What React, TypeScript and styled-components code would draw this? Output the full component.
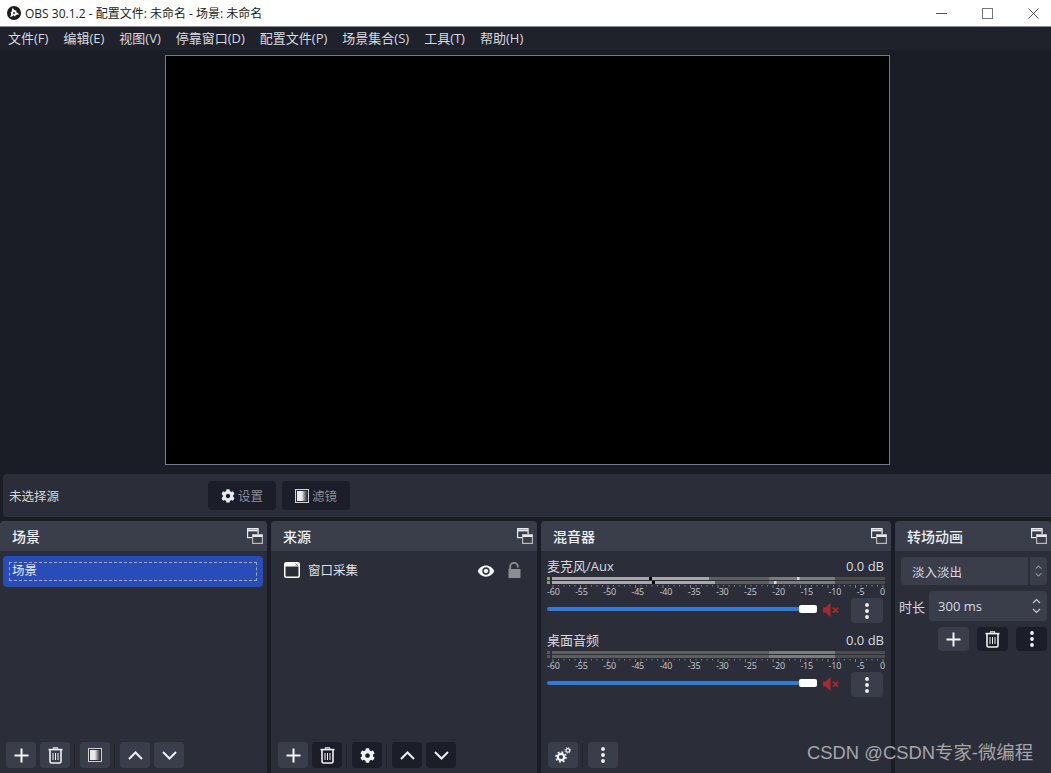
import React from 'react'
import styled, { createGlobalStyle } from 'styled-components'
import { FaCog } from 'react-icons/fa'
import { MdVisibility } from 'react-icons/md'

const FONT = `"Open Sans", "Noto Sans CJK SC", "Noto Sans", sans-serif`

const GlobalStyle = createGlobalStyle`
  html, body { margin: 0; padding: 0; background: #1a1c26; overflow: hidden; }
  body { font-family: ${FONT}; color: #e6e8ee; font-size: 12px; }
  * { box-sizing: border-box; }
`

const Window = styled.div`
  position: relative;
  width: 1051px;
  height: 773px;
  display: flex;
  flex-direction: column;
  background: #1a1c26;
`

const TitleBar = styled.div`
  height: 27px;
  flex: none;
  background: #fff;
  border-bottom: 1px solid #8a8a8a;
  color: #222;
  display: flex;
  align-items: center;
  padding-left: 7px;
  font-size: 12px;
`

const TitleText = styled.span`
  margin-left: 4px;
  flex: 1;
`

const WinButton = styled.div`
  width: 46px;
  height: 26px;
  padding-left: 10px;
  display: flex;
  align-items: center;
  justify-content: center;
`

const MenuBar = styled.div`
  height: 23px;
  flex: none;
  background: #1f222b;
  display: flex;
  align-items: center;
  padding: 0 0 2px 8px;
  gap: 15px;
  color: #d8dae0;
`

const MenuItem = styled.span`
  font-size: 13px;
  white-space: nowrap;
`

const PreviewArea = styled.div`
  height: 424px;
  flex: none;
  display: flex;
  justify-content: center;
  padding: 5px 161px 9px 165px;
`

const PreviewCanvas = styled.div`
  width: 100%;
  background: #000;
  border: 1px solid #767a88;
`

const ContextBar = styled.div`
  height: 43px;
  flex: none;
  margin: 0 0 4px 3px;
  background: #2b2e38;
  border-radius: 4px 0 0 4px;
  display: flex;
  align-items: center;
  padding-left: 6px;
`

const ContextLabel = styled.span`
  width: 199px;
  font-size: 12.5px;
  color: #d4d6dc;
`

const ContextButton = styled.div`
  width: 68px;
  height: 29px;
  margin-right: 6px;
  background: #1b1d28;
  border-radius: 4px;
  color: #8d8f98;
  display: flex;
  align-items: center;
  justify-content: center;
  gap: 3px;
  font-size: 12.5px;
`

const Docks = styled.div`
  flex: 1;
  min-height: 0;
  display: grid;
  grid-template-columns: 267px 266px 350px 156px;
  column-gap: 4px;
`

const Dock = styled.section`
  background: #2b2e38;
  border-radius: 4px 4px 0 0;
  display: flex;
  flex-direction: column;
  min-width: 0;
`

const DockHeader = styled.header`
  height: 30px;
  flex: none;
  background: #3a3e4a;
  border-radius: 4px 4px 0 0;
  display: flex;
  align-items: center;
  justify-content: space-between;
  padding: 0 4px 0 12px;
  font-size: 14px;
  font-weight: 500;
  color: #eceef2;
`

const DockBody = styled.div`
  flex: 1;
  min-height: 0;
  display: flex;
  flex-direction: column;
`

const SceneList = styled.div`
  flex: 1;
  padding: 5px 4px 0 3px;
`

const SceneItem = styled.div`
  height: 31px;
  background: #284cb8;
  border-radius: 4px;
  padding: 6px;
`

const SceneEdit = styled.div`
  height: 19px;
  border: 1px dashed #a5a9b8;
  padding-left: 2px;
  line-height: 16px;
  font-size: 12.5px;
  color: #e8eaf2;
`

const SourceRow = styled.div`
  flex: 1;
  display: flex;
  align-items: flex-start;
  padding: 11px 9px 0 13px;
  font-size: 12.5px;
  color: #dfe1e8;
`

const SourceName = styled.span`
  margin-left: 8px;
  flex: 1;
  line-height: 17px;
`

const SourceToggle = styled.span`
  display: flex;
  width: 28px;
  justify-content: center;
`

const Toolbar = styled.div<{ $left?: number }>`
  height: 31px;
  flex: none;
  display: flex;
  align-items: flex-start;
  gap: 4px;
  padding-left: ${(p) => p.$left ?? 6}px;
`

const ToolButton = styled.div<{ $dark?: boolean; $w?: number; $h?: number }>`
  width: ${(p) => p.$w ?? 30}px;
  height: ${(p) => p.$h ?? 26}px;
  flex: none;
  border-radius: 4px;
  background: ${(p) => (p.$dark ? '#1b1d28' : '#3a3e4a')};
  color: #f2f3f6;
  display: flex;
  align-items: center;
  justify-content: center;
`

const ToolSep = styled.div`
  width: 1px;
  height: 24px;
  margin: 1px 1px 0 0;
  background: #20222c;
`

const Channels = styled.div`
  flex: 1;
  padding: 5px 6px 0;
  display: flex;
  flex-direction: column;
  gap: 10px;
`

const Channel = styled.div`
  height: 64px;
  display: flex;
  flex-direction: column;
`

const ChannelHead = styled.div`
  height: 19px;
  display: flex;
  justify-content: space-between;
  align-items: center;
  font-size: 13px;
  color: #d8dae0;
  padding-right: 1px;
`

const MeterWrap = styled.div`
  height: 11px;
  display: block;
  width: 338px;
`

const ScaleLabels = styled.div`
  display: flex;
  justify-content: space-between;
  width: 338px;
  height: 11px;
  font-size: 9px;
  line-height: 11px;
  color: #c8cad0;
  letter-spacing: -0.2px;
`

const FaderRow = styled.div`
  display: flex;
  align-items: center;
  height: 25px;
  margin-top: 1px;
`

const FaderTrack = styled.div`
  position: relative;
  width: 270px;
  height: 4px;
  margin-top: -3px;
  border-radius: 2px;
  background: #2f7bd6;
`

const FaderKnob = styled.div`
  position: absolute;
  right: 0;
  top: -2px;
  width: 18px;
  height: 8px;
  border-radius: 2px;
  background: #fff;
`

const MuteSlot = styled.div`
  width: 34px;
  display: flex;
  justify-content: flex-start;
  padding-left: 6px;
  margin-top: -2px;
`

const TransitionBody = styled.div`
  flex: 1;
  padding: 6px 4px 0 6px;
  display: flex;
  flex-direction: column;
`

const Combo = styled.div`
  height: 28px;
  background: #3a3e4a;
  border-radius: 4px;
  display: flex;
  align-items: center;
  color: #d8dae0;
  font-size: 12.5px;
`

const ComboText = styled.span`
  flex: 1;
  padding-left: 11px;
`

const ComboArrow = styled.span`
  width: 19px;
  height: 28px;
  border-left: 2px solid #2b2e38;
  display: flex;
  align-items: center;
  justify-content: center;
`

const DurationRow = styled.div`
  display: flex;
  align-items: center;
  margin-top: 6px;
  margin-left: -2px;
  font-size: 13px;
  color: #d8dae0;
`

const Spin = styled.div`
  width: 118px;
  height: 30px;
  margin-left: 4px;
  background: #3a3e4a;
  border-radius: 4px;
  display: flex;
  align-items: center;
  justify-content: space-between;
  padding: 0 6px 0 9px;
`

const TransitionTools = styled.div`
  display: flex;
  justify-content: flex-end;
  gap: 8px;
  margin-top: 6px;
`

const Watermark = styled.div`
  position: absolute;
  left: 807px;
  top: 740px;
  font-size: 18.4px;
  line-height: 25px;
  color: #a4a6aa;
  font-family: "Liberation Sans", "Noto Sans CJK SC", sans-serif;
  white-space: nowrap;
`

const menus = ['文件(F)', '编辑(E)', '视图(V)', '停靠窗口(D)', '配置文件(P)', '场景集合(S)', '工具(T)', '帮助(H)']
const scale = ['-60', '-55', '-50', '-45', '-40', '-35', '-30', '-25', '-20', '-15', '-10', '-5', '0']

function ObsLogo() {
  const blade = 'M7 7 C4.6 6.2 4.2 3.4 6 1.8 C6.2 3.6 7.6 4.6 9.4 4.4 C9.8 5.8 8.6 7.2 7 7 Z'
  return (
    <svg width="14" height="14" viewBox="0 0 14 14">
      <circle cx="7" cy="7" r="7" fill="#1c1c1c" />
      {[0, 120, 240].map((a) => (
        <path key={a} d={blade} fill="#fff" transform={`rotate(${a} 7 7)`} />
      ))}
      <circle cx="7" cy="7" r="0.9" fill="#1c1c1c" />
    </svg>
  )
}

function FloatIcon() {
  return (
    <svg width="16" height="16" viewBox="0 0 16 16" fill="none" stroke="#e8e9ec" strokeWidth="1.2">
      <rect x="0.6" y="0.6" width="10.5" height="9" />
      <line x1="0.6" y1="2.4" x2="11" y2="2.4" strokeWidth="2" />
      <rect x="5.6" y="6.6" width="9.8" height="8.8" fill="#3a3e4a" stroke="#b8bac0" />
      <line x1="5.6" y1="8" x2="15.4" y2="8" strokeWidth="2" />
    </svg>
  )
}

function FilterIcon({ id }: { id: string }) {
  return (
    <svg width="14" height="14" viewBox="0 0 14 14">
      <defs>
        <linearGradient id={id}>
          <stop offset="0" stopColor="#fff" />
          <stop offset="1" stopColor="#333" />
        </linearGradient>
      </defs>
      <rect x="0.5" y="0.5" width="13" height="13" fill="#2b2e38" stroke="#d0d1d6" />
      <rect x="2" y="2" width="5" height="10" fill="#e8e8ea" />
      <rect x="6" y="2" width="6" height="10" fill={`url(#${id})`} />
    </svg>
  )
}

function PlusIcon() {
  return (
    <svg width="15" height="15" viewBox="0 0 15 15" stroke="#f4f5f7" strokeWidth="2">
      <line x1="7.5" y1="0.5" x2="7.5" y2="14.5" />
      <line x1="0.5" y1="7.5" x2="14.5" y2="7.5" />
    </svg>
  )
}

function TrashIcon() {
  return (
    <svg width="15" height="17" viewBox="0 0 15 17" fill="none" stroke="#f0f1f4">
      <path d="M5 1.6 L5.6 0.8 H9.4 L10 1.6" strokeWidth="1.3" />
      <line x1="0.5" y1="2.6" x2="14.5" y2="2.6" strokeWidth="1.6" />
      <path d="M2 3 V14.5 Q2 16 3.5 16 H11.5 Q13 16 13 14.5 V3" strokeWidth="1.6" />
      <path d="M5 6 V13 M7.5 6 V13 M10 6 V13" strokeWidth="1" />
    </svg>
  )
}

function ChevronUp() {
  return (
    <svg width="15" height="9" viewBox="0 0 15 9" fill="none" stroke="#eceef2" strokeWidth="2">
      <path d="M1 8 L7.5 1.5 L14 8" />
    </svg>
  )
}

function ChevronDown() {
  return (
    <svg width="15" height="9" viewBox="0 0 15 9" fill="none" stroke="#eceef2" strokeWidth="2">
      <path d="M1 1 L7.5 7.5 L14 1" />
    </svg>
  )
}

function DotsIcon() {
  return (
    <svg width="4" height="16" viewBox="0 0 4 16" fill="#f2f3f6">
      <circle cx="2" cy="2" r="1.9" />
      <circle cx="2" cy="8" r="1.9" />
      <circle cx="2" cy="14" r="1.9" />
    </svg>
  )
}

function WindowIcon() {
  return (
    <svg width="16" height="16" viewBox="0 0 16 16">
      <rect x="0.75" y="0.75" width="14.5" height="14.5" rx="1.5" fill="#2b2e38" stroke="#fff" strokeWidth="1.5" />
      <rect x="1" y="1" width="14" height="3.5" fill="#fff" />
      <path d="M11.5 1.5 L14 4 M14 1.5 L11.5 4" stroke="#777" strokeWidth="0.8" />
    </svg>
  )
}

function LockIcon() {
  return (
    <svg width="13" height="16" viewBox="0 0 13 16" fill="#8b8d90">
      <rect x="0.5" y="7" width="12" height="9" rx="0.5" />
      <path d="M2.2 7 V4.4 A3.8 3.6 0 0 1 9.8 4.4 V5.4" fill="none" stroke="#8b8d90" strokeWidth="1.9" />
    </svg>
  )
}

function MuteIcon() {
  return (
    <svg width="16" height="14" viewBox="0 0 16 14">
      <path d="M0 4.5 H2.5 L7.5 0 V14 L2.5 9.5 H0 Z" fill="#a52a2a" />
      <path d="M10 4.6 L15 9.6 M15 4.6 L10 9.6" stroke="#a52a2a" strokeWidth="2" />
    </svg>
  )
}

function GearsIcon() {
  return (
    <svg width="16" height="16" viewBox="0 0 16 16" fill="none" stroke="#f2f3f6">
      <circle cx="6" cy="10" r="3.2" strokeWidth="2.2" />
      <circle cx="6" cy="10" r="5" strokeWidth="1.6" strokeDasharray="1.9 2" />
      <circle cx="12.8" cy="3.4" r="1.8" strokeWidth="1.2" />
      <circle cx="12.8" cy="3.4" r="2.8" strokeWidth="0.9" strokeDasharray="1.1 1.1" />
    </svg>
  )
}

function SpinArrows({ small }: { small?: boolean }) {
  const w = small ? 7 : 9
  return (
    <svg width={w} height="16" viewBox="0 0 9 16" fill="none" stroke="#c8cad0" strokeWidth="1.2">
      <path d="M1 5 L4.5 1.5 L8 5" />
      <path d="M1 11 L4.5 14.5 L8 11" />
    </svg>
  )
}

function Meter({ active }: { active: boolean }) {
  const ticks = Array.from({ length: 61 }, (_, i) => i)
  const rows = [
    { y: 0, lit: 157, mark: 102, peak: 250 },
    { y: 4, lit: 163, mark: 105, peak: 227 },
  ]
  return (
    <MeterWrap>
      <svg width="338" height="11" viewBox="0 0 338 11">
        {rows.map((r) => (
          <g key={r.y}>
            <rect x="0" y={r.y} width="3" height="3" fill={active ? '#6fb62f' : '#55575a'} />
            <rect x="5" y={r.y} width="217" height="3" fill="#5d5f5c" />
            <rect x="222" y={r.y} width="66" height="3" fill="#7a7c7a" />
            <rect x="288" y={r.y} width="50" height="3" fill="#4a4c4a" />
            {active && <rect x="5" y={r.y} width={r.lit} height="3" fill="#a6a7a6" />}
            {active && <rect x={r.mark} y={r.y} width="3" height="3" fill="#000" />}
            {active && <rect x={r.peak} y={r.y} width="2.5" height="3" fill="#d8d8d8" />}
          </g>
        ))}
        {ticks.map((i) => {
          const x = 5.5 + i * 5.5
          const major = i % 5 === 0
          return <rect key={i} x={x} y="8" width="1" height={major ? 3 : 1.5} fill="#80828a" />
        })}
      </svg>
    </MeterWrap>
  )
}

function MixerChannel({ name, active }: { name: string; active: boolean }) {
  return (
    <Channel>
      <ChannelHead>
        <span>{name}</span>
        <span>0.0 dB</span>
      </ChannelHead>
      <Meter active={active} />
      <ScaleLabels>
        {scale.map((s) => (
          <span key={s}>{s}</span>
        ))}
      </ScaleLabels>
      <FaderRow>
        <FaderTrack>
          <FaderKnob />
        </FaderTrack>
        <MuteSlot>
          <MuteIcon />
        </MuteSlot>
        <ToolButton $w={32} $h={25}>
          <DotsIcon />
        </ToolButton>
      </FaderRow>
    </Channel>
  )
}

export default function App() {
  return (
    <Window>
      <GlobalStyle />
      <TitleBar>
        <ObsLogo />
        <TitleText>OBS 30.1.2 - 配置文件: 未命名 - 场景: 未命名</TitleText>
        <WinButton>
          <svg width="11" height="1"><rect width="11" height="1" fill="#555" /></svg>
        </WinButton>
        <WinButton>
          <svg width="11" height="11"><rect x="0.5" y="0.5" width="10" height="10" fill="none" stroke="#777" /></svg>
        </WinButton>
        <WinButton>
          <svg width="11" height="11" stroke="#555"><path d="M0.5 0.5 L10.5 10.5 M10.5 0.5 L0.5 10.5" /></svg>
        </WinButton>
      </TitleBar>
      <MenuBar>
        {menus.map((m) => (
          <MenuItem key={m}>{m}</MenuItem>
        ))}
      </MenuBar>
      <PreviewArea>
        <PreviewCanvas />
      </PreviewArea>
      <ContextBar>
        <ContextLabel>未选择源</ContextLabel>
        <ContextButton>
          <FaCog size={14} color="#e8e9ec" />
          设置
        </ContextButton>
        <ContextButton>
          <FilterIcon id="ctx-filter" />
          滤镜
        </ContextButton>
      </ContextBar>
      <Docks>
        <Dock>
          <DockHeader>
            场景
            <FloatIcon />
          </DockHeader>
          <DockBody>
            <SceneList>
              <SceneItem>
                <SceneEdit>场景</SceneEdit>
              </SceneItem>
            </SceneList>
            <Toolbar>
              <ToolButton><PlusIcon /></ToolButton>
              <ToolButton><TrashIcon /></ToolButton>
              <ToolSep />
              <ToolButton><FilterIcon id="scene-filter" /></ToolButton>
              <ToolSep />
              <ToolButton><ChevronUp /></ToolButton>
              <ToolButton><ChevronDown /></ToolButton>
            </Toolbar>
          </DockBody>
        </Dock>
        <Dock>
          <DockHeader>
            来源
            <FloatIcon />
          </DockHeader>
          <DockBody>
            <SourceRow>
              <WindowIcon />
              <SourceName>窗口采集</SourceName>
              <SourceToggle><MdVisibility size={18} color="#f4f5f7" /></SourceToggle>
              <SourceToggle><LockIcon /></SourceToggle>
            </SourceRow>
            <Toolbar $left={7}>
              <ToolButton><PlusIcon /></ToolButton>
              <ToolButton $dark><TrashIcon /></ToolButton>
              <ToolSep />
              <ToolButton $dark><FaCog size={15} /></ToolButton>
              <ToolSep />
              <ToolButton $dark><ChevronUp /></ToolButton>
              <ToolButton $dark><ChevronDown /></ToolButton>
            </Toolbar>
          </DockBody>
        </Dock>
        <Dock>
          <DockHeader>
            混音器
            <FloatIcon />
          </DockHeader>
          <DockBody>
            <Channels>
              <MixerChannel name="麦克风/Aux" active />
              <MixerChannel name="桌面音频" active={false} />
            </Channels>
            <Toolbar $left={7}>
              <ToolButton><GearsIcon /></ToolButton>
              <ToolSep />
              <ToolButton><DotsIcon /></ToolButton>
            </Toolbar>
          </DockBody>
        </Dock>
        <Dock>
          <DockHeader>
            转场动画
            <FloatIcon />
          </DockHeader>
          <DockBody>
            <TransitionBody>
              <Combo>
                <ComboText>淡入淡出</ComboText>
                <ComboArrow><SpinArrows small /></ComboArrow>
              </Combo>
              <DurationRow>
                时长
                <Spin>
                  300 ms
                  <SpinArrows />
                </Spin>
              </DurationRow>
              <TransitionTools>
                <ToolButton $w={31} $h={24}><PlusIcon /></ToolButton>
                <ToolButton $w={31} $h={24} $dark><TrashIcon /></ToolButton>
                <ToolButton $w={31} $h={24} $dark><DotsIcon /></ToolButton>
              </TransitionTools>
            </TransitionBody>
          </DockBody>
        </Dock>
      </Docks>
      <Watermark>CSDN @CSDN专家-微编程</Watermark>
    </Window>
  )
}
